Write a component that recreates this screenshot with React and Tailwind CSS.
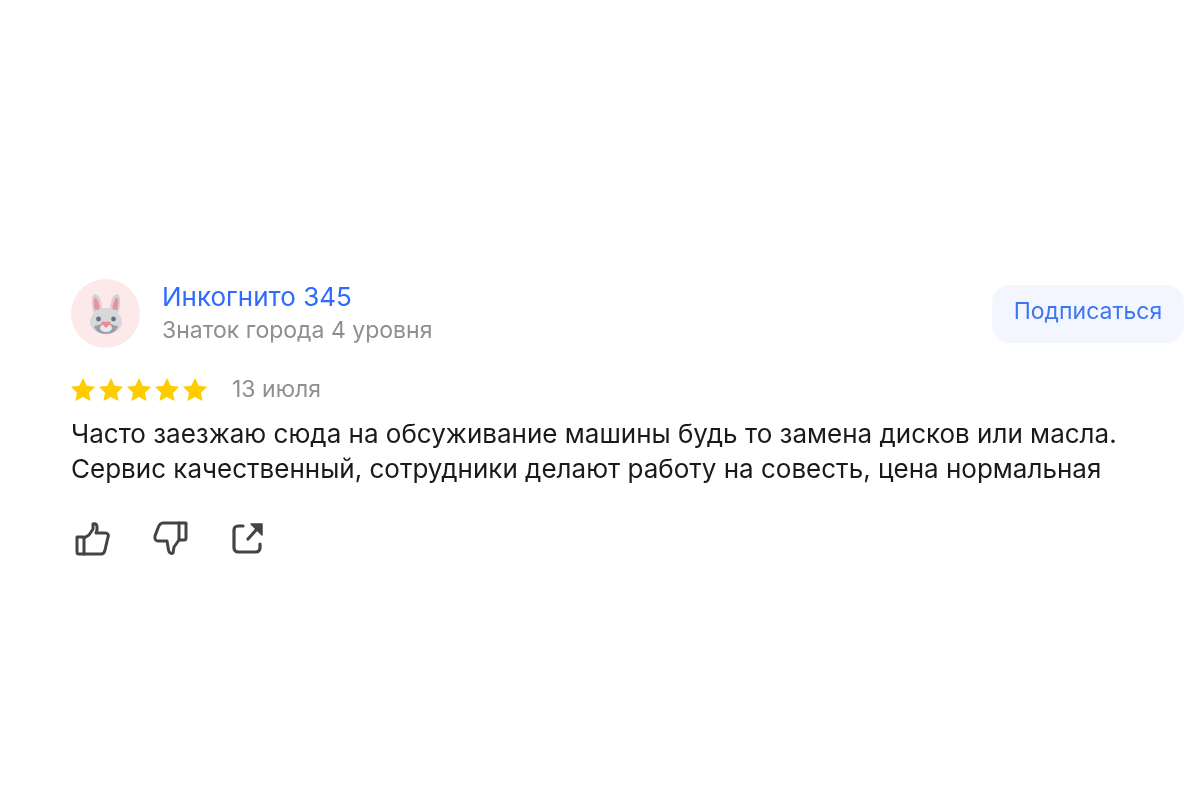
import React from "react";

const Star = () => (
  <svg width="26" height="26" viewBox="0 0 24 24" className="block -mx-px">
    <path d="M12 1l3.400 7.100 7.800 1-5.700 5.400 1.500 7.700-7-3.800-7 3.800 1.500-7.700L.8 9.100l7.800-1z" fill="#fc0" />
  </svg>
);

const Bunny = () => (
  <svg width="34" height="42" viewBox="0 0 34 42">
    <path d="M5 20C2 12 2 3 5.500 1 11 1 13 10 13 18z" fill="#d2d2d6" />
    <path d="M29 20c3-8 3-17-.5-19C23 1 21 10 21 18z" fill="#d2d2d6" />
    <path d="M6 17C4.500 12 4.500 7 6 4.500c3 1.500 4.500 7 4.500 12z" fill="#ee8f9c" />
    <path d="M28 17c1.500-5 1.500-10 0-12.500-3 1.500-4.500 7-4.500 12z" fill="#ee8f9c" />
    <path d="M17 15c9 0 15 6 16 14 0 7-7 12-16 12S1 36 1 29c1-8 7-14 16-14z" fill="#d6d8db" />
    <path d="M5 33c4 0 8-3 12-3s8 3 12 3c-1 5-6 8-12 8S6 38 5 33z" fill="#9a9fa6" />
    <ellipse cx="17" cy="35" rx="6" ry="4" fill="#e8e9eb" />
    <circle cx="9.500" cy="26" r="2.400" fill="#6a7078" />
    <circle cx="24.500" cy="26" r="2.400" fill="#6a7078" />
    <path d="M13 29.500h8l-4 4.500z" fill="#f4858f" stroke="#f4858f" strokeWidth="1.500" strokeLinejoin="round" />
  </svg>
);

const ThumbUp = () => (
  <svg width="36" height="36" viewBox="0 0 36 36" fill="none" stroke="#444" strokeWidth="3" strokeLinejoin="round" strokeLinecap="round">
    <path d="M2 16h7v17H4a2 2 0 0 1-2-2z" />
    <path d="M9 17l5-3 4-6V3c3-1 4 1 4 3v3l-1 3h9c3 0 4 2 3 4l-3 13c-.4 2-2 4-4 4H9" />
  </svg>
);

const ThumbDown = () => (
  <svg width="36" height="36" viewBox="0 0 36 36" fill="none" stroke="#444" strokeWidth="3" strokeLinejoin="round" strokeLinecap="round">
    <path d="M33 2h-7v17h5a2 2 0 0 0 2-2z" />
    <path d="M26 2H10C7 2 6 4 5 7l-3 8c-.5 3 .5 5 3 5h9l1.500 9c.5 3 3 4 4.500 3l1-6 5-7" />
  </svg>
);

const Share = () => (
  <svg width="36" height="36" viewBox="0 0 36 36" fill="none" stroke="#444" strokeWidth="3.200" strokeLinejoin="round" strokeLinecap="round">
    <path d="M12 5H7a4 4 0 0 0-4 4v18a4 4 0 0 0 4 4h18a4 4 0 0 0 4-4v-4" />
    <path d="M17 18L26 8" />
    <path d="M20 3h11v11z" fill="#444" strokeWidth="1.500" />
  </svg>
);

export default function App() {
  return (
    <div className="w-[1200px] h-[800px] bg-white pt-[279px] pl-[71px] pr-[16px] font-['Inter',sans-serif] blur-[0.7px]">
      <div className="flex items-center justify-between">
        <div className="flex items-center gap-[22px]">
          <div className="w-[69px] h-[69px] rounded-full bg-[#fde9e9] flex items-center justify-center">
            <Bunny />
          </div>
          <div className="flex flex-col -mt-[2px]">
            <span className="text-[26px] leading-[34px] text-[#2f6bff]">Инкогнито 345</span>
            <span className="text-[23px] leading-[32px] text-[#8f8f8f]">Знаток города 4 уровня</span>
          </div>
        </div>
        <button className="w-[192px] h-[58px] rounded-[18px] bg-[#f3f6fe] text-[#3d76f5] text-[23px] pb-[4px]">Подписаться</button>
      </div>
      <div className="flex items-center gap-[25px] mt-[27px]">
        <div className="flex gap-[4px]"><Star /><Star /><Star /><Star /><Star /></div>
        <span className="text-[23px] leading-[32px] text-[#8f8f8f] -mt-[2px]">13 июля</span>
      </div>
      <p className="mt-[11px] text-[26px] leading-[35px] text-[#1a1a1a]">
        Часто заезжаю сюда на обсуживание машины будь то замена дисков или масла.<br />
        Сервис качественный, сотрудники делают работу на совесть, цена нормальная
      </p>
      <div className="flex gap-[42px] mt-[35px] ml-[4px]">
        <ThumbUp /><ThumbDown /><Share />
      </div>
    </div>
  );
}
